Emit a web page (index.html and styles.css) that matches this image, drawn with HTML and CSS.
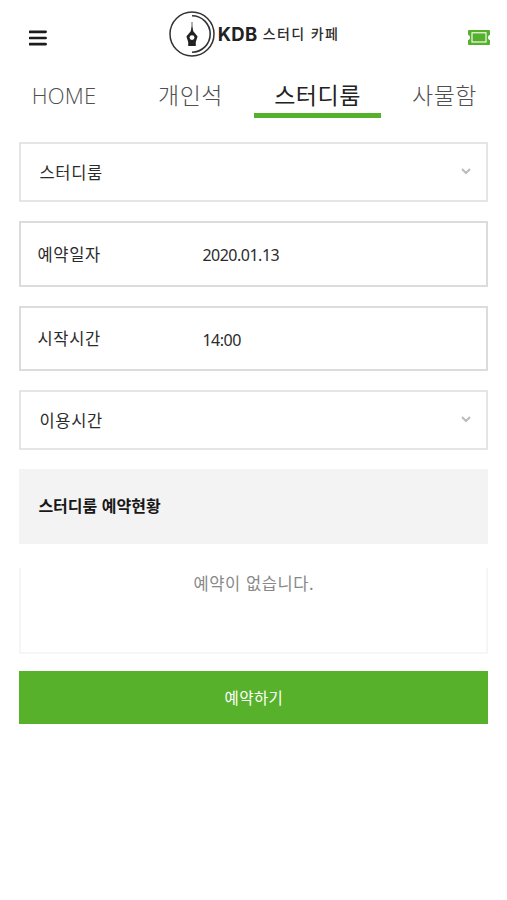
FILE: index.html
```html
<!DOCTYPE html>
<html lang="ko">
<head>
<meta charset="utf-8">
<title>KDB 스터디 카페</title>
<link rel="stylesheet" href="styles.css">
</head>
<body>
<header class="header">
  <svg class="menu" viewBox="0 0 18 16"><path d="M.9 1.8H16.6M.9 8H16.6M.9 14.2H16.6" stroke="#1c1c1c" stroke-width="2.7" stroke-linecap="round"/></svg>
  <div class="brand">
    <svg class="logo" viewBox="0 0 46 46" fill="none" stroke="#333">
      <circle cx="23" cy="23" r="22" stroke-width="1.5"/>
      <path d="M23 4.8A18.2 18.2 0 0 1 23 41.2" stroke-width="1.6"/>
      <path d="M23 11V19" stroke-width=".8"/>
      <path d="M23 15L24.3 20.2L28.6 25.5L26.8 31H19.2L17.4 25.5L21.7 20.2Z" fill="#222" stroke="none"/>
      <path d="M19.2 30.5H26.8V35H19.2Z" fill="#222" stroke="none"/>
      <circle cx="23" cy="26.6" r="2.4" fill="#fff" stroke="none"/>
    </svg>
    <span class="name">KDB</span>
    <span class="sub">스터디 카페</span>
  </div>
  <svg class="ticket" viewBox="0 0 22 15"><path d="M1 0H21Q22 0 22 1V4.8A2.8 2.8 0 0 0 22 10.2V14Q22 15 21 15H1Q0 15 0 14V10.2A2.8 2.8 0 0 0 0 4.8V1Q0 0 1 0Z" fill="#55b12b"/><rect x="4" y="2.8" width="14" height="9.2" fill="none" stroke="#fff" stroke-width="1.1"/></svg>
</header>
<nav class="tabs">
  <a class="tab home">HOME</a>
  <a class="tab">개인석</a>
  <a class="tab active">스터디룸</a>
  <a class="tab">사물함</a>
</nav>
<main class="form">
  <div class="field select"><span class="label">스터디룸</span><svg class="chevron" viewBox="0 0 10 7"><path d="M1 1L5 5L9 1" fill="none" stroke="#bbb" stroke-width="2"/></svg></div>
  <div class="field input"><span class="label">예약일자</span><span class="value">2020.01.13</span></div>
  <div class="field input"><span class="label">시작시간</span><span class="value">14:00</span></div>
  <div class="field select"><span class="label">이용시간</span><svg class="chevron" viewBox="0 0 10 7"><path d="M1 1L5 5L9 1" fill="none" stroke="#bbb" stroke-width="2"/></svg></div>
  <h2 class="status">스터디룸 예약현황</h2>
  <div class="empty">예약이 없습니다.</div>
  <button class="submit">예약하기</button>
</main>
</body>
</html>
```
FILE: styles.css
```css
* { box-sizing: border-box; }
body {
  margin: 0;
  height: 900px;
  background: #fff;
  color: #2b2b2b;
  font-family: "Noto Sans CJK KR", sans-serif;
}
.header {
  height: 75px;
  padding: 0 17px 0 29px;
  display: flex;
  justify-content: space-between;
  align-items: center;
}
.menu { width: 18px; height: 16px; }
.ticket { width: 22px; height: 15px; }
.brand { display: flex; align-items: center; margin: -7px 0 0 -7px; }
.logo { width: 46px; height: 46px; }
.name {
  margin-left: 3px;
  width: 45px;
  font: 700 18.5px/24px Inter, sans-serif;
  letter-spacing: .4px;
  color: #222;
}
.sub { margin-top: -2px; font-size: 14px; font-weight: 500; line-height: 24px; letter-spacing: 1.4px; white-space: nowrap; }
.tabs {
  height: 42px;
  display: grid;
  grid-template-columns: repeat(4, 127px);
}
.tab {
  text-align: center;
  font-size: 23px;
  font-weight: 300;
  line-height: 38px;
  letter-spacing: .5px;
  color: #505050;
  white-space: nowrap;
}
.home { padding-left: 1px; font-family: "Open Sans", sans-serif; font-size: 22px; line-height: 40px; letter-spacing: .2px; }
.active { border-bottom: 5px solid #55b12b; color: #222; font-weight: 400; }
.form {
  width: 469px;
  margin: 25px 0 0 19.4px;
  display: flex;
  flex-direction: column;
}
.field {
  display: flex;
  align-items: center;
  margin-bottom: 19px;
  font-size: 16.5px;
  line-height: 24px;
  letter-spacing: .7px;
}
.select { height: 60px; border: 2px solid #e5e5e5; padding: 0 15px 0 18px; justify-content: space-between; }
.input { height: 65.5px; border: 2px solid #dcdcdc; padding: 0 16px; }
.input .label { width: 165px; }
.value { font-family: "Noto Sans", sans-serif; font-size: 16px; letter-spacing: -.5px; padding-top: 3px; }
.chevron { width: 10px; height: 7px; margin-top: -2px; }
.status {
  height: 75px;
  margin: 0 0 24px;
  padding-left: 19px;
  background: #f3f3f3;
  color: #181818;
  font-size: 16px;
  font-weight: 700;
  line-height: 72px;
}
.empty {
  height: 86px;
  border: 2px solid #f6f6f6;
  border-top: 0;
  padding-top: 3px;
  text-align: center;
  font-size: 16.5px;
  line-height: 24px;
  letter-spacing: .6px;
  color: #888;
}
.submit {
  height: 52.5px;
  margin-top: 17px;
  border: 0;
  padding: 0;
  background: #58b12a;
  color: #fff;
  font: 400 15.5px/51px "Noto Sans CJK KR", sans-serif;
  letter-spacing: .4px;
}
```
